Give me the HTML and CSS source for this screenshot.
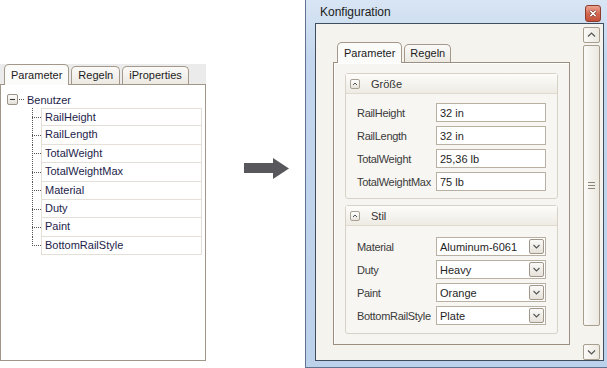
FILE: index.html
```html
<!doctype html>
<html lang="de">

<head>
  <meta charset="utf-8">
  <title>Konfiguration</title>
  <link rel="stylesheet" href="styles.css">
</head>

<body>
  <div class="stage">

    <!-- Parameter-Baum (vorher) -->
    <section class="tree-pane">
      <div class="tabs">
        <span class="tab active">Parameter</span>
        <span class="tab">Regeln</span>
        <span class="tab">iProperties</span>
      </div>
      <div class="tree">
        <div class="root">
          <span class="toggle"></span>
          <span class="root-link"></span>
          <span class="root-label">Benutzer</span>
        </div>
        <ul class="nodes">
          <li><span class="branch"></span><span class="cell">RailHeight</span></li>
          <li><span class="branch"></span><span class="cell">RailLength</span></li>
          <li><span class="branch"></span><span class="cell">TotalWeight</span></li>
          <li><span class="branch"></span><span class="cell">TotalWeightMax</span></li>
          <li><span class="branch"></span><span class="cell">Material</span></li>
          <li><span class="branch"></span><span class="cell">Duty</span></li>
          <li><span class="branch"></span><span class="cell">Paint</span></li>
          <li><span class="branch"></span><span class="cell">BottomRailStyle</span></li>
        </ul>
      </div>
    </section>

    <svg class="arrow" width="46" height="23" viewBox="0 0 46 23">
      <rect x="0" y="6" width="30" height="10" fill="#58585c" />
      <polygon points="29,1 45,11.5 29,22" fill="#58585c" />
    </svg>

    <!-- Konfigurationsdialog (nachher) -->
    <section class="window">
      <header class="titlebar">
        <span class="title">Konfiguration</span>
        <span class="close">
          <svg width="16" height="15" viewBox="0 0 16 15">
            <path d="M5 4.5 L11 10.5 M11 4.5 L5 10.5" stroke="#5a1e14" stroke-width="3.2" />
            <path d="M5 4.5 L11 10.5 M11 4.5 L5 10.5" stroke="#fff" stroke-width="1.8" />
          </svg>
        </span>
      </header>

      <div class="client">
        <div class="content">
          <div class="tabs">
            <span class="tab active">Parameter</span>
            <span class="tab narrow">Regeln</span>
          </div>
          <div class="tab-page">

            <div class="group">
              <div class="group-head">
                <span class="collapse">
                  <svg width="8" height="8" viewBox="0 0 8 8"><polyline points="2,5 4,3 6,5" fill="none" stroke="#555" stroke-width="1" /></svg>
                </span>
                Größe
              </div>
              <div class="group-body first">
                <div class="field"><label>RailHeight</label><span class="input">32 in</span></div>
                <div class="field"><label>RailLength</label><span class="input">32 in</span></div>
                <div class="field"><label>TotalWeight</label><span class="input">25,36 lb</span></div>
                <div class="field"><label>TotalWeightMax</label><span class="input">75 lb</span></div>
              </div>
            </div>

            <div class="group">
              <div class="group-head">
                <span class="collapse">
                  <svg width="8" height="8" viewBox="0 0 8 8"><polyline points="2,5 4,3 6,5" fill="none" stroke="#555" stroke-width="1" /></svg>
                </span>
                Stil
              </div>
              <div class="group-body">
                <div class="field"><label>Material</label><span class="input combo">Aluminum-6061<span class="drop"></span></span></div>
                <div class="field"><label>Duty</label><span class="input combo">Heavy<span class="drop"></span></span></div>
                <div class="field"><label>Paint</label><span class="input combo">Orange<span class="drop"></span></span></div>
                <div class="field"><label>BottomRailStyle</label><span class="input combo">Plate<span class="drop"></span></span></div>
              </div>
            </div>

          </div>
        </div>

        <div class="scrollbar">
          <span class="sb-btn up"></span>
          <span class="thumb"><span class="grip"></span></span>
          <span class="track"></span>
          <span class="sb-btn down"></span>
        </div>
      </div>
    </section>

  </div>
</body>
</html>
```

FILE: styles.css
```css
body {
  margin: 0;
  font-family: "Liberation Sans", Arial, sans-serif;
  font-size: 11px;
  background: #fff;
}
.stage {
  display: flex;
  align-items: flex-start;
  width: 607px;
  height: 368px;
  overflow: hidden;
}

/* tabs, shared */
.tabs {
  display: flex;
  align-items: flex-end;
  gap: 2px;
  height: 20px;
  padding-left: 4px;
}
.tab {
  position: relative;
  height: 17px;
  line-height: 17px;
  padding: 0 6px;
  border: 1px solid #a39889;
  border-bottom: none;
  border-radius: 5px 5px 0 0;
  background: linear-gradient(#fbfaf8, #ecE9e2);
  color: #1c1c1c;
}
.tab.narrow {
  padding: 0 5px;
}
.tab.active {
  z-index: 1;
  height: 20px;
  line-height: 20px;
  margin-bottom: -1px;
  padding: 0 6px;
  background: #fbfbf9;
}

/* left: tree */
.tree-pane {
  flex: none;
  width: 206px;
  margin-top: 64px;
}
.tree-pane .tabs {
  background: #ebebeb;
}
.tree {
  box-sizing: border-box;
  height: 277px;
  padding: 7px 0 0 6px;
  border: 1px solid #a0968a;
  background: #fff;
}
.root {
  display: flex;
  align-items: center;
  height: 15px;
}
.toggle {
  display: flex;
  align-items: center;
  justify-content: center;
  box-sizing: border-box;
  width: 11px;
  height: 11px;
  border: 1px solid #9b9387;
  border-radius: 2px;
  background: linear-gradient(#fdfdfc, #e4e0d8);
}
.toggle::before {
  content: "";
  width: 5px;
  height: 1px;
  background: #333;
}
.root-link {
  width: 5px;
  margin-left: 1px;
  border-top: 1px dotted #555;
}
.root-label {
  margin-left: 3px;
  color: #1d1d4a;
}
.nodes {
  list-style: none;
  margin: 1px 0 0 25px;
  padding: 0;
}
.nodes li {
  display: flex;
  height: 18.4px;
}
.branch {
  flex: none;
  width: 9px;
  background-image:
    repeating-linear-gradient(to bottom, #555 0 1px, transparent 1px 2px),
    repeating-linear-gradient(to right, #555 0 1px, transparent 1px 2px);
  background-size: 1px 100%, 100% 1px;
  background-position: 0 0, 0 50%;
  background-repeat: no-repeat;
}
.nodes li:last-child .branch {
  background-size: 1px 50%, 100% 1px;
}
.cell {
  flex: 1;
  margin-right: 3px;
  padding-left: 3px;
  border: 1px solid #e4e0d7;
  border-top: none;
  line-height: 17px;
  color: #1d1d4a;
}
.nodes li:first-child .cell {
  border-top: 1px solid #e4e0d7;
}

.arrow {
  flex: none;
  margin: 157px 0 0 38px;
}

/* right: dialog window */
.window {
  flex: none;
  display: flex;
  flex-direction: column;
  box-sizing: border-box;
  width: 310px;
  height: 368px;
  margin-left: 15px;
  padding: 0 10px 6px 9px;
  border: 1px solid #5f7290;
  border-top: none;
  background: linear-gradient(#d8e5f4, #c3d6ed 60px, #bcd1ea);
}
.titlebar {
  flex: none;
  display: flex;
  justify-content: space-between;
  height: 23px;
}
.title {
  margin: 5px 0 0 5px;
  font-size: 12px;
  color: #1b1b1b;
}
.close {
  display: flex;
  align-items: center;
  justify-content: center;
  box-sizing: border-box;
  width: 16px;
  height: 17px;
  margin: 5px 3px 0 0;
  border: 1px solid #8c3b2d;
  border-radius: 3px;
  background: linear-gradient(#eba492, #d46a53 50%, #c4503a);
}
.client {
  flex: 1;
  display: flex;
  min-height: 0;
  border: 1px solid #3f4d5e;
  background: #f4f3ee;
}
.content {
  flex: 1;
  padding: 18px 0 0 17px;
}
.tab-page {
  display: flex;
  flex-direction: column;
  gap: 6px;
  box-sizing: border-box;
  width: 237px;
  height: 283px;
  padding: 10px 11px;
  border: 1px solid #9d8f80;
  box-shadow: inset 1px 1px #fff;
  background: #f6f5f1;
}
.group {
  border: 1px solid #d8d2c6;
  border-radius: 3px;
  background: #f7f6f2;
}
.group-head {
  display: flex;
  align-items: center;
  gap: 11px;
  height: 19px;
  padding-left: 4px;
  border-bottom: 1px solid #dfd9ce;
  background: linear-gradient(#fdfcfa, #eeebe4);
  color: #333;
}
.collapse {
  display: flex;
  align-items: center;
  justify-content: center;
  box-sizing: border-box;
  width: 10px;
  height: 10px;
  border: 1px solid #aaa195;
  border-radius: 2px;
  background: linear-gradient(#fff, #e7e3dc);
}
.group-body {
  display: flex;
  flex-direction: column;
  gap: 4px;
  padding: 11px 10px 8px 11px;
}
.group-body.first {
  padding-top: 9px;
  padding-bottom: 7px;
}
.field {
  display: flex;
  align-items: center;
  height: 19px;
}
.field label {
  flex: none;
  width: 79px;
  color: #3a3a3a;
  letter-spacing: -0.3px;
  white-space: nowrap;
}
.input {
  display: flex;
  align-items: center;
  justify-content: space-between;
  box-sizing: border-box;
  width: 110px;
  height: 19px;
  padding-left: 3px;
  border: 1px solid #b9b0a2;
  background: #fff;
  color: #1f1f1f;
}
.drop {
  box-sizing: border-box;
  width: 15px;
  height: 15px;
  margin-right: 1px;
  border: 1px solid #a0968a;
  border-radius: 2px;
  background:
    url("data:image/svg+xml,%3Csvg xmlns='http://www.w3.org/2000/svg' width='13' height='13'%3E%3Cpolyline points='3.5,5 6.5,8 9.5,5' fill='none' stroke='%23555' stroke-width='1.1'/%3E%3C/svg%3E") center no-repeat,
    linear-gradient(#fbfaf8, #e6e2da);
}

/* scrollbar */
.scrollbar {
  flex: none;
  display: flex;
  flex-direction: column;
  width: 17px;
  margin: 3px 3px 0 0;
}
.sb-btn,
.thumb {
  box-sizing: border-box;
  border: 1px solid #a89e90;
  border-radius: 2px;
  background-color: #f1efe9;
  background-image: linear-gradient(to right, #fbfaf8, #ebe8e0);
}
.sb-btn {
  flex: none;
  height: 16px;
  background-position: center;
  background-repeat: no-repeat;
}
.sb-btn.up {
  background-image:
    url("data:image/svg+xml,%3Csvg xmlns='http://www.w3.org/2000/svg' width='15' height='14'%3E%3Cpolyline points='4,8.5 7.5,5 11,8.5' fill='none' stroke='%23555' stroke-width='1.2'/%3E%3C/svg%3E"),
    linear-gradient(to right, #fbfaf8, #ebe8e0);
}
.sb-btn.down {
  background-image:
    url("data:image/svg+xml,%3Csvg xmlns='http://www.w3.org/2000/svg' width='15' height='14'%3E%3Cpolyline points='4,5.5 7.5,9 11,5.5' fill='none' stroke='%23555' stroke-width='1.2'/%3E%3C/svg%3E"),
    linear-gradient(to right, #fbfaf8, #ebe8e0);
}
.thumb {
  display: flex;
  align-items: center;
  justify-content: center;
  height: 281px;
  margin-top: 2px;
}
.grip {
  width: 7px;
  height: 5px;
  border-top: 1px solid #8d8477;
  border-bottom: 1px solid #8d8477;
  background: linear-gradient(#8d8477, #8d8477) 0 2px / 7px 1px no-repeat;
}
.track {
  flex: 1;
}
```
